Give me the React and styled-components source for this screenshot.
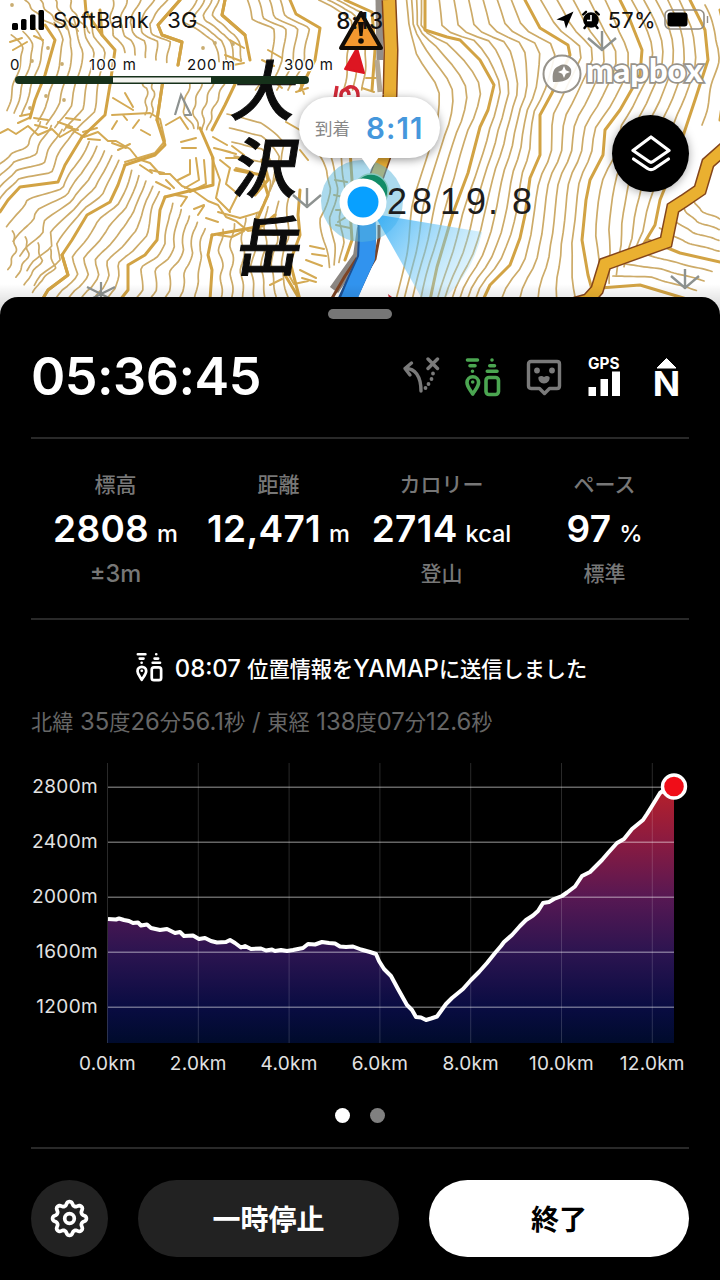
import React from 'react';
import styled, { createGlobalStyle } from 'styled-components';

const GlobalStyle = createGlobalStyle`
  * {
    box-sizing: border-box;
  }

  body {
    background: #000;
    font-family: Inter, 'Noto Sans CJK JP', sans-serif;
    margin: 0;
  }
`;

const Screen = styled.div`
  background: #000;
  height: 1280px;
  overflow: hidden;
  width: 720px;
`;

const MapArea = styled.div`
  background: #fff;
  height: 320px;
  overflow: hidden;
  position: relative;
`;

const MapCanvas = styled.svg`
  display: block;
  left: 0;
  position: absolute;
  top: 0;
`;

const StatusBar = styled.div`
  align-items: center;
  color: #111;
  display: grid;
  font-size: 22px;
  grid-template-columns: 1fr auto 1fr;
  height: 40px;
  letter-spacing: 0.3px;
  padding: 0 10px 0 12px;
  position: relative;
`;

const StatusGroup = styled.div`
  align-items: center;
  display: flex;
  gap: ${(props) => props.$gap}px;
  justify-content: ${(props) => (props.$end ? 'flex-end' : 'flex-start')};
`;

const Carrier = styled.span`
  margin-right: 9px;
`;

const Clock = styled.span`
  font-size: 22.5px;
  font-weight: 500;
  letter-spacing: 0.8px;
  margin-right: 2px;
`;

const Sheet = styled.div`
  background: #000;
  border-radius: 18px 18px 0 0;
  color: #fff;
  height: 983px;
  margin-top: -23px;
  padding: 12px 31px 0;
  position: relative;
`;

const Handle = styled.div`
  background: #767676;
  border-radius: 5px;
  height: 10px;
  margin: 0 auto;
  width: 64px;
`;

const TimerRow = styled.div`
  align-items: center;
  display: flex;
  height: 118px;
  justify-content: space-between;
  padding-bottom: 2px;
`;

const Timer = styled.div`
  font-size: 52px;
  font-weight: 600;
  letter-spacing: -0.5px;
  line-height: 60px;
`;

const Divider = styled.div`
  background: #292929;
  height: 2px;
`;

const Stats = styled.div`
  display: grid;
  grid-template-columns: repeat(4, 163px);
  height: 179px;
  padding: 30px 3px 0;
`;

const Stat = styled.div`
  text-align: center;
  white-space: nowrap;
`;

const Caption = styled.div`
  color: #777;
  font-size: 21px;
  font-weight: 500;
  line-height: 32px;
`;

const Note = styled(Caption)`
  margin-top: -3px;
`;

const Value = styled.div`
  font-size: 37px;
  font-weight: 600;
  letter-spacing: 0.3px;
  line-height: 55px;
`;

const Unit = styled.span`
  font-size: 23.5px;
  font-weight: 500;
  letter-spacing: 0;
  margin-left: 8px;
`;

// Latin runs are set larger than the kana and kanji beside them
const Latin = styled.span`
  font-size: 1.125em;
  white-space: pre;
`;

const Message = styled.div`
  align-items: center;
  display: flex;
  font-size: 21.2px;
  font-weight: 500;
  gap: 12px;
  height: 94px;
  justify-content: center;
  padding-left: 3px;
  white-space: nowrap;
`;

const Coordinates = styled.div`
  color: #666;
  font-size: 21.2px;
  line-height: 30px;
  margin-top: -7px;
  white-space: nowrap;
`;

const Chart = styled.svg`
  display: block;
  margin: 18px 0 0 -31px;
`;

const Dots = styled.div`
  display: flex;
  gap: 20px;
  justify-content: center;
  padding: 8px 0 24px 0;
`;

const Dot = styled.span`
  background: ${(props) => (props.$active ? '#fff' : '#808080')};
  border-radius: 50%;
  height: 15px;
  width: 15px;
`;

const Actions = styled.div`
  display: grid;
  gap: 30px;
  grid-template-columns: 77px 261px 260px;
  padding-top: 31px;
`;

const Button = styled.button`
  align-items: center;
  background: ${(props) => (props.$primary ? '#fff' : '#222')};
  border: 0;
  border-radius: 39px;
  color: ${(props) => (props.$primary ? '#000' : '#fff')};
  display: flex;
  font-family: inherit;
  font-size: 28px;
  font-weight: 700;
  height: 77px;
  justify-content: center;
  padding: 0 0 2px;
`;

const LayersButton = styled.button`
  align-items: center;
  background: #000;
  border: 0;
  border-radius: 50%;
  box-shadow: 0 1px 10px rgba(0, 0, 0, 0.35);
  display: flex;
  height: 77px;
  justify-content: center;
  padding: 0;
  position: absolute;
  right: 31px;
  top: 115px;
  width: 77px;
`;

const Callout = styled.div`
  align-items: center;
  background: #fff;
  border-radius: 31px;
  box-shadow: 0 2px 10px rgba(0, 0, 0, 0.4);
  display: flex;
  gap: 16px;
  height: 61px;
  left: 299px;
  padding-left: 16px;
  position: absolute;
  top: 97px;
  width: 141px;

  &::after {
    border: 9px solid transparent;
    border-bottom: 0;
    border-top: 13px solid #fff;
    content: '';
    left: 62px;
    position: absolute;
    top: 60px;
  }
`;

const CalloutLabel = styled.span`
  color: #888;
  font-size: 17.5px;
`;

const CalloutTime = styled.span`
  color: #4597dc;
  font-size: 29.5px;
  font-weight: 600;
  letter-spacing: 1.1px;
`;

// [line, line, number of thin contours between them]
const families = [
  ['30,118 18,140 0,152', '82,137 65,165 58,182 20,187 8,200 0,212', 4],
  ['82,137 65,165 58,182 20,187 8,200 0,212', '125,165 118,185 110,202 87,215 72,240 62,255 68,275 48,290 42,300', 5],
  ['125,165 118,185 110,202 87,215 72,240 62,255 68,275 48,290 42,300', '165,197 160,210 157,240 145,255 128,265 128,290 120,300', 5],
  ['165,197 160,210 157,240 145,255 128,265 128,290 120,300', '212,235 208,255 212,270 210,300', 5],
  ['0,225 4,245 0,262', '62,255 68,275 48,290 42,300', 4],
  ['212,235 208,255 212,270 210,300', '300,190 298,215 300,235 290,262 300,300', 7],
  ['0,38 14,50 5,85 0,108', '45,25 55,40 45,75 35,100 30,118', 3],
  ['45,25 55,40 45,75 35,100 30,118', '100,10 102,35 115,50 110,85 105,115 82,137', 5],
  ['10,0 30,18 45,25', '85,0 86,12 102,35', 4],
  ['100,0 102,35 115,50', '180,0 158,25 162,35 182,42 178,65', 5],
  ['125,80 140,85 140,112', '163,80 160,100 157,120', 2],
  ['178,85 172,112 190,128', '237,80 225,105 212,130', 4],
  ['190,0 172,22 205,40 212,62', '225,0 222,15 245,35 250,60', 4],
  ['237,0 240,20 262,28 262,60 245,90', '290,0 296,14 320,28 315,60 300,90', 4],
  ['225,100 262,110 290,130 280,170', '235,170 262,175 268,195 255,225', 4],
  ['310,0 345,20 340,50 335,90', '345,0 372,12 375,50 372,90', 3],
  ['305,150 318,170 325,190 310,220 315,245 325,270', '350,150 352,180 350,210 352,240 345,260', 3],
  ['402,0 406,60 428,92 424,125 414,160 402,205 398,250 388,300', '425,0 425,30 447,37 460,40 480,60 494,85 488,110 480,127 468,173 453,213 437,267 430,300', 4],
  ['425,0 425,30 447,37 460,40 480,60 494,85 488,110 480,127 468,173 453,213 437,267 430,300', '525,0 540,28 568,45 570,55 552,93 540,115 540,155 530,178 525,215 520,238 510,265 490,285 483,300', 6],
  ['525,0 540,28 568,45 570,55 552,93 540,115 540,155 530,178 525,215 520,238 510,265 490,285 483,300', '620,0 630,20 642,50 640,75 620,110 605,130 603,155 590,180 586,200 582,240 588,275 595,300', 5],
  ['620,0 630,20 642,50 640,75 620,110 605,130 603,155 590,180 586,200 582,240 588,275 595,300', '690,0 705,30 708,60 695,100 685,130 672,170 660,200 655,225 640,250', 5],
  ['690,0 705,30 708,60 695,100 685,130', '720,10 730,50 720,120', 1],
  ['700,180 704,200 720,208', '648,240 680,253 720,262', 4],
  ['648,240 680,253 720,262', '600,288 640,285 690,300', 3],
];

const cliffs =
  'M0 133l8 -4 8 5 12 -8 10 9 14 -6 8 8 12 -7 12 7 14 -5 10 9 8 0 14 8 8 10 12 4 10 11 10 0 12 12 12 5 14 10 10 4 8 12 10 4 12 10 12 -2 14 6 12 -4' +
  'M10 42l12 -4M13 50l14 -8M34 36l9 4M18 123l11 -5M20 116l10 -2M34 118l14 2M35 125l12 3M58 122l14 5M66 118l14 2M66 127l12 3M83 132l14 -4M88 139l12 1' +
  'M113 98l20 12M125 93l8 14M112 115l38 -2 10 6 5 22 -10 12 -30 9M112 129l5 -8M123 115l4 5M133 128l6 -8M141 130l9 5M112 143l14 5M118 150l12 -6' +
  'M140 165l12 8M150 170l14 3M166 125l14 -8 8 12M181 142l15 -4M182 148l14 0M156 182l14 7M166 180l8 8M194 209l10 -4M198 215l6 -9M206 218l12 4M213 137l14 8M214 148l16 4' +
  'M190 160l0 14 -12 6M196 158l3 22 -14 8M204 160l2 24 -16 8M175 195l12 2 -6 9M218 235l14 2 12 -6' +
  'M220 160l10 8 -4 16 12 10 -8 16M212 158l8 22 -4 18 14 14M218 212l22 6 20 -6' +
  'M225 55l16 6M230 40l14 8M228 66l16 -3M262 60l12 6M268 50l14 8M272 80l10 8M290 85l12 -6M296 92l12 -4M300 82l4 12' +
  'M222 150l14 4M226 158l14 0M232 146l12 9M236 168l16 4M300 270l16 8M302 278l14 4M306 260l16 6M335 180l12 2M334 195l14 3M336 210l12 0M336 225l14 3M338 222l10 -6' +
  'M286 270l8 14 14 -3M270 285l12 -6M300 150l8 10M310 246l14 3M312 254l14 2M362 88l12 4M366 78l10 0M300 130l-14 -8';

const boldExtra = [
  '163,80 160,100 157,120 165,145 155,155 125,165',
  '200,128 213,158 213,185 165,197',
  '212,235 240,230 262,226 275,215',
  '180,0 158,25 162,35 182,42 178,65',
  '225,0 222,15 245,35',
  '262,160 268,180 255,195',
  '290,262 285,275 300,300',
];

const roads = [
  '570,305 588,300 597,290 605,264 666,242 673,208 684,201 700,190 708,163 725,148',
];

function parse(line) {
  return line.split(' ').map((pair) => pair.split(',').map(Number));
}

function resample(points, count) {
  const lengths = [0];
  for (let i = 1; i < points.length; i += 1) {
    lengths.push(lengths[i - 1] + Math.hypot(points[i][0] - points[i - 1][0], points[i][1] - points[i - 1][1]));
  }
  const total = lengths[lengths.length - 1];
  return Array.from({ length: count }, (_, n) => {
    const at = (total * n) / (count - 1);
    let i = 1;
    while (i < lengths.length - 1 && lengths[i] < at) i += 1;
    const t = (at - lengths[i - 1]) / (lengths[i] - lengths[i - 1]);
    return [0, 1].map((k) => points[i - 1][k] + (points[i][k] - points[i - 1][k]) * t);
  });
}

function between(a, b, count) {
  const from = resample(parse(a), 28);
  const to = resample(parse(b), 28);
  return Array.from({ length: count }, (_, n) => {
    const t = (n + 1) / (count + 1);
    return from
      .map(([x, y], i) => {
        const wobble = Math.sin(i * 0.6 + n * 0.5) * 1.1;
        return `${(x + (to[i][0] - x) * t + wobble).toFixed(1)},${(y + (to[i][1] - y) * t).toFixed(1)}`;
      })
      .join(' ');
  });
}

function Contours() {
  const bold = [...new Set(families.map(([, b]) => b))];
  return (
    <g fill="none" strokeLinejoin="round" strokeLinecap="round">
      <g stroke="#cdab68" strokeWidth="1.7">
        {families.flatMap(([a, b, count]) => between(a, b, count)).map((points) => (
          <polyline key={points} points={points} />
        ))}
      </g>
      <path d={cliffs} stroke="#d4aa54" strokeWidth="2" />
      <g stroke="#d2a344" strokeWidth="3">
        {[...bold, ...boldExtra].map((points) => (
          <polyline key={points} points={points} />
        ))}
      </g>
    </g>
  );
}

function Conifer({ x, y }) {
  return <path d={`M${x} ${y - 20}v20M${x - 14} ${y - 13}l14 12 14 -12`} fill="none" stroke="#8d9290" strokeWidth="2.4" />;
}

function TrailMap() {
  return (
    <MapCanvas width="720" height="320" viewBox="0 0 720 320">
      <defs>
        <linearGradient id="beam" gradientUnits="userSpaceOnUse" x1="380" y1="212" x2="462" y2="275">
          <stop offset="0" stopColor="#2ba9f5" stopOpacity="0.85" />
          <stop offset="1" stopColor="#8fd6f7" stopOpacity="0.3" />
        </linearGradient>
        <linearGradient id="sheetShade" x1="0" y1="0" x2="0" y2="1">
          <stop offset="0" stopColor="#000" stopOpacity="0" />
          <stop offset="1" stopColor="#000" stopOpacity="0.22" />
        </linearGradient>
      </defs>
      <Contours />
      <g fill="#c9ad72">
        {[[48, 48], [32, 61], [62, 64], [46, 96], [64, 100], [30, 108], [203, 48], [215, 43], [233, 44], [12, 5]].map(([x, y]) => (
          <circle key={`${x}-${y}`} cx={x} cy={y} r="1.9" />
        ))}
      </g>
      <Conifer x={602} y={51} />
      <Conifer x={685} y={289} />
      <Conifer x={307} y={208} />
      <path d="M87 287l28 14M115 287l-28 14M101 282v20M175 115l6 -20 10 20M184 115h8" fill="none" stroke="#8d9290" strokeWidth="2.2" />

      <g fill="none" strokeLinejoin="round">
        <path d="M379 0L380 60" stroke="#948e88" strokeWidth="7" />
        <path d="M377 60L380 92" stroke="#b5a892" strokeWidth="5" />
        <path d="M362 228L358 256 334 290" stroke="#8b8682" strokeWidth="10" />
        {roads.map((points) => (
          <g key={points} strokeLinejoin="miter">
            <polyline points={points} stroke="#84451b" strokeWidth="14" />
            <polyline points={points} stroke="#eab030" strokeWidth="11" />
          </g>
        ))}
        <path d="M389 0L391 50 390 95 386 150 372 190" stroke="#84451b" strokeWidth="15" />
        <path d="M389 0L391 50 390 95 386 150 372 190" stroke="#e9ae34" strokeWidth="12" />
        <path d="M379 225L379 238 375 259 362 280M357 258L345 276 331 300" stroke="#7d4425" strokeWidth="3" />
        <path d="M366 215L367 236 366 258 356 280 344 306" stroke="#1c4f92" strokeWidth="18" />
        <path d="M367 215L368 236 367 258 357 280 346 306" stroke="#3193ee" strokeWidth="16" />
      </g>

      <circle cx="362" cy="201" r="41" fill="#58b5dc" fillOpacity="0.5" />
      <path d="M374 214L482 232A124 124 0 0 1 446 297H421Z" fill="url(#beam)" />

      <g fill="#0c0c0c" stroke="#0c0c0c" fontFamily="'Noto Sans CJK JP', sans-serif" fontWeight="500" fontSize="65">
        <text transform="translate(229 115) skewX(-9)">大</text>
        <text transform="translate(231 192) skewX(-9)">沢</text>
        <text transform="translate(234 270) skewX(-9)">岳</text>
      </g>
      <text
        x="387 412 440 466 488 512"
        y="214"
        fill="#1d1d1d"
        fontFamily="'Liberation Sans', sans-serif"
        fontSize="36"
      >
        2819.8
      </text>

      <path d="M357 48L345 69 364 73Z" fill="#dd1622" stroke="#dd1622" strokeWidth="2" strokeLinejoin="round" />
      <path d="M337 86l-2 12M341 98c-1 -10 8 -11 8 -3M345 90c4 -5 14 -5 13 8" fill="none" stroke="#d22a38" strokeWidth="3.5" />
      <path d="M361 13L341 48H381Z" fill="#f3982f" stroke="#120c06" strokeWidth="4" strokeLinejoin="round" />
      <path d="M358 22h6l-1.5 14h-3z" fill="#120c06" />
      <circle cx="361" cy="41" r="2.8" fill="#120c06" />
      <path d="M388 294l8 6 -6 3z" fill="#d22a38" />

      <g fontFamily="Inter, sans-serif" fontSize="15" fill="#111" stroke="#fff" strokeWidth="2.5" paintOrder="stroke">
        <text x="10" y="70">0</text>
        <text x="89" y="70" textLength="47">100 m</text>
        <text x="187" y="70" textLength="48">200 m</text>
        <text x="284" y="70" textLength="49">300 m</text>
      </g>
      <rect x="15" y="76" width="294" height="8" rx="4" fill="#16311a" />
      <rect x="113" y="77.500" width="98" height="5" fill="#f4f4f0" />

      <g>
        <circle cx="562" cy="74" r="18.5" fill="#fff" fillOpacity="0.9" stroke="#97938b" strokeWidth="2" />
        <path d="M553 82c-1 -8 0 -14 6 -16 5 -3 10 -1 12 3 1 5 -1 9 -5 11 -4 2 -9 2 -13 2z" fill="#8f8b84" />
        <path d="M564 66l1.800 4.200 4.200 1.800 -4.200 1.800 -1.800 4.200 -1.800 -4.200 -4.200 -1.800 4.200 -1.800z" fill="#fff" />
        <text
          x="586"
          y="82"
          textLength="117"
          lengthAdjust="spacingAndGlyphs"
          fill="#fff"
          stroke="#97938b"
          strokeWidth="3.4"
          paintOrder="stroke"
          fontFamily="Lato, sans-serif"
          fontWeight="900"
          fontSize="33"
        >
          mapbox
        </text>
      </g>

      <circle cx="371" cy="191" r="17" fill="#118b67" stroke="#85c7bd" strokeWidth="1.5" />
      <circle cx="363" cy="202" r="23.5" fill="#fff" />
      <circle cx="363" cy="202" r="15.5" fill="#08a0ff" />
      <rect y="284" width="720" height="36" fill="url(#sheetShade)" />
    </MapCanvas>
  );
}

function SignalBars() {
  return (
    <svg width="32" height="21" viewBox="0 0 32 21" fill="#000">
      <rect x="0" y="13" width="6" height="7" rx="1.5" />
      <rect x="9" y="9" width="5.5" height="11" rx="1.5" />
      <rect x="18" y="4.5" width="5.5" height="15.5" rx="1.5" />
      <rect x="26.5" y="0" width="5.5" height="20" rx="1.5" />
    </svg>
  );
}

function LocationArrow() {
  return (
    <svg width="18" height="18" viewBox="0 0 18 18" fill="#000">
      <path d="M17.5 0.5L0.5 8.5 8 10 10 17.5Z" />
    </svg>
  );
}

function AlarmIcon() {
  return (
    <svg width="18" height="20" viewBox="0 0 18 20">
      <circle cx="9" cy="10" r="7.8" />
      <path d="M1.200 4.500L4 1.800M16.800 4.500L14 1.800M4 16l-1.500 2M14 16l1.500 2" stroke="#000" strokeWidth="2.400" strokeLinecap="round" />
      <path d="M9 5v5.5H5" stroke="#fff" strokeWidth="1.6" fill="none" />
    </svg>
  );
}

function BatteryIcon() {
  return (
    <svg width="46" height="22" viewBox="0 0 46 22">
      <rect x="1" y="1" width="39" height="19" rx="5" fill="none" stroke="#918c83" strokeWidth="1.6" />
      <rect x="3.5" y="3.5" width="20" height="14" rx="3" />
      <path d="M43.5 7v7" stroke="#918c83" strokeWidth="1.4" />
    </svg>
  );
}

function LayersIcon() {
  return (
    <svg width="40" height="38" viewBox="0 0 40 38" fill="none" stroke="#fff" strokeWidth="3.200" strokeLinejoin="round" strokeLinecap="round">
      <path d="M20 2L38 15.5 22 26.5Q20 28 18 26.5L2 15.5Z" />
      <path d="M2.500 24L16.500 33.5Q20 35.800 23.500 33.5L37.500 24" />
    </svg>
  );
}

function DetourIcon() {
  return (
    <svg width="38" height="40" viewBox="0 0 38 40" fill="none" stroke="#7a7a7a" strokeWidth="3.4" strokeLinecap="round">
      <path d="M9.500 6L3 11.500 8 18M3 11.500C13 11 19 19 19 34" strokeLinejoin="round" />
      <path d="M26 2l9.500 9.500M35.500 2L26 11.500" />
      <path d="M31 16.500v0M29.500 22v0M26.500 27v0M23.500 31v0" strokeWidth="3.800" />
    </svg>
  );
}

function BeaconIcon({ color, width, height }) {
  return (
    <svg width={width} height={height} viewBox="0 0 36 40" fill="none" stroke={color} strokeWidth="3.6" strokeLinecap="round">
      <path d="M2.500 3H12.500M5 8.700H10M7.500 14.300v0M27 3v0M24.800 8.700H29.500M22.300 14.300H32" />
      <path d="M7.700 37C5 32.500 2 29.500 2 25.500a5.800 5.800 0 0 1 11.600 0C13.600 29.500 10.500 32.500 7.700 37z" strokeLinejoin="round" />
      <circle cx="7.700" cy="25" r="1.800" fill={color} stroke="none" />
      <rect x="21" y="20.500" width="12.500" height="17" rx="3" />
    </svg>
  );
}

function BubbleIcon() {
  return (
    <svg width="36" height="40" viewBox="0 0 36 40" fill="none" stroke="#7a7a7a" strokeWidth="3.4" strokeLinejoin="round">
      <path d="M5 4.500H31Q33.500 4.500 33.500 7V29Q33.500 31.500 31 31.500H23.500L18.500 36.500 13.500 31.500H5Q2.500 31.500 2.500 29V7Q2.500 4.500 5 4.500Z" />
      <g fill="#7a7a7a" stroke="none">
        <circle cx="11" cy="13.500" r="2.900" />
        <circle cx="26" cy="13.500" r="2.900" />
        <path d="M12.500 20q3 -2 5.500 0 3 -2 5.500 0c.8 3 -2 6.500 -5.500 6.500s-6.300 -3.500 -5.500 -6.500z" />
      </g>
    </svg>
  );
}

function GpsIcon() {
  return (
    <svg width="35" height="42" viewBox="0 0 35 42" fill="#fff" overflow="visible">
      <text x="1" y="12.500" textLength="31.500" lengthAdjust="spacingAndGlyphs" fontFamily="Inter, sans-serif" fontSize="15.500" fontWeight="700">
        GPS
      </text>
      <path d="M1.500 31H9V40H1.500ZM13.500 23H21V40H13.500ZM25 15.500H33V40H25Z" />
    </svg>
  );
}

function NorthIcon() {
  return (
    <svg width="33" height="42" viewBox="-7 0 33 42" fill="#fff" overflow="visible">
      <path d="M12.500 2.500L22 12H3Z" stroke="#fff" strokeLinejoin="round" />
      <text x="-1.300" y="40" textLength="27.500" lengthAdjust="spacingAndGlyphs" fontFamily="Inter, sans-serif" fontSize="33.500" fontWeight="700">
        N
      </text>
    </svg>
  );
}

const IconRow = styled.div`
  align-items: center;
  display: flex;
  gap: 25px;
  margin-right: 9px;
`;

function gearPath() {
  const steps = 96;
  const points = Array.from({ length: steps }, (_, i) => {
    const angle = (i / steps) * Math.PI * 2;
    const radius = 15 + 2.2 * Math.tanh(1.3 * Math.cos(angle * 8));
    return `${(20 + radius * Math.sin(angle)).toFixed(2)} ${(20 - radius * Math.cos(angle)).toFixed(2)}`;
  });
  return `M${points.join('L')}Z`;
}

function GearIcon() {
  return (
    <svg width="40" height="40" viewBox="0.5 -0.5 40 40" fill="none" stroke="#fff" strokeWidth="3.7" strokeLinejoin="round">
      <path d={gearPath()} />
      <circle cx="20" cy="20" r="4.8" />
    </svg>
  );
}

const elevation =
  '108,919 116,919.500 119,918.500 124,920 129,921 133,923 138,922.500 141,925.500 147,924.500 151,928 160,930 167,929 175,933 180,932 184,936 193,935.500 ' +
  '199,939 205,938 211,941 217,942.500 226,942 230,940 235,943 241,947.500 245,946 251,949 261,948.500 266,950.500 272,949.500 275,951 281,950 287,951 293,950 ' +
  '303,948 308,944 315,944.500 322,942 329,943 335,943.500 340,946.500 346,947 353,946.500 361,949.500 370,952 376,954 379,961 384,969 391,976 398,989 ' +
  '407,1005 412,1010 416,1017 421,1017.500 426,1020 431,1018.500 437,1016.500 446,1004 452,998 463,989 471,980 479,972 487,963 495,953 501,946 504,942 ' +
  '512,935 520,926 526,920 533,915.500 538,911 543,903 549,902 554,899 562,896 567,892.500 575,886.500 582,876 590,872 597,865 602,860 608,853 617,843 ' +
  '624,839 632,829 643,820 647,814 652,806 660,793 667,788 674,786.500';

const distances = ['0.0', '2.0', '4.0', '6.0', '8.0', '10.0', '12.0'];
const heights = [2800, 2400, 2000, 1600, 1200];

function ElevationChart() {
  return (
    <Chart width="720" height="345" viewBox="0 755 720 345" fontFamily="Inter, sans-serif" fontSize="19" fill="#e2e2e2">
      <defs>
        <linearGradient id="climb" gradientUnits="userSpaceOnUse" x1="0" y1="787" x2="0" y2="1043">
          <stop offset="0" stopColor="#b8202a" />
          <stop offset="0.210" stopColor="#8b1b40" />
          <stop offset="0.430" stopColor="#571853" />
          <stop offset="0.650" stopColor="#2b1450" />
          <stop offset="0.860" stopColor="#090c42" />
          <stop offset="1" stopColor="#000b2c" />
        </linearGradient>
      </defs>
      <polygon points={`107,1043 ${elevation} 674,1043`} fill="url(#climb)" />
      {distances.map((km, i) => (
        <rect key={km} x={107 + i * 90.8} y="763" width="1" height="280" fill="#fff" fillOpacity="0.16" />
      ))}
      {heights.map((m, i) => (
        <rect key={m} x="108" y={786.5 + i * 55} width="566" height="1.500" fill="#fff" fillOpacity="0.4" />
      ))}
      <polyline points={elevation} fill="none" stroke="#fff" strokeWidth="4" strokeLinejoin="round" />
      <circle cx="674" cy="786.500" r="11.500" fill="#f00d18" stroke="#fff" strokeWidth="3.400" />
      {heights.map((m, i) => (
        <text key={m} x="98" y={792.5 + i * 55} textAnchor="end" letterSpacing="0.350">
          {m}m
        </text>
      ))}
      {distances.map((km, i) => (
        <text key={km} x={107.5 + i * 90.8} y="1070" textAnchor="middle" letterSpacing="0.250">
          {km}km
        </text>
      ))}
    </Chart>
  );
}

function MixedText({ children }) {
  return children
    .split(/([ -~±]+)/)
    .filter(Boolean)
    .map((run, i) => (/^[ -~±]/.test(run) ? <Latin key={i}>{run}</Latin> : run));
}

const stats = [
  { label: '標高', value: '2808', unit: 'm', note: '±3m' },
  { label: '距離', value: '12,471', unit: 'm', note: '' },
  { label: 'カロリー', value: '2714', unit: 'kcal', note: '登山' },
  { label: 'ペース', value: '97', unit: '%', note: '標準' },
];

export default function App() {
  return (
    <Screen lang="ja">
      <GlobalStyle />
      <MapArea>
        <TrailMap />
        <StatusBar>
          <StatusGroup $gap={9}>
            <SignalBars />
            <Carrier>SoftBank</Carrier>
            <span>3G</span>
          </StatusGroup>
          <Clock>8:13</Clock>
          <StatusGroup $gap={8} $end>
            <LocationArrow />
            <AlarmIcon />
            <span>57%</span>
            <BatteryIcon />
          </StatusGroup>
        </StatusBar>
        <LayersButton aria-label="レイヤー">
          <LayersIcon />
        </LayersButton>
        <Callout>
          <CalloutLabel>到着</CalloutLabel>
          <CalloutTime>8:11</CalloutTime>
        </Callout>
      </MapArea>
      <Sheet>
        <Handle />
        <TimerRow>
          <Timer>05:36:45</Timer>
          <IconRow>
            <DetourIcon />
            <BeaconIcon color="#4ba651" width={36} height={40} />
            <BubbleIcon />
            <GpsIcon />
            <NorthIcon />
          </IconRow>
        </TimerRow>
        <Divider />
        <Stats>
          {stats.map((stat) => (
            <Stat key={stat.label}>
              <Caption>{stat.label}</Caption>
              <Value>
                {stat.value}
                <Unit>{stat.unit}</Unit>
              </Value>
              <Note>
                <MixedText>{stat.note}</MixedText>
              </Note>
            </Stat>
          ))}
        </Stats>
        <Divider />
        <Message>
          <BeaconIcon color="#fff" width={27} height={30} />
          <span>
            <MixedText>08:07 位置情報をYAMAPに送信しました</MixedText>
          </span>
        </Message>
        <Coordinates>
          <MixedText>北緯 35度26分56.1秒 / 東経 138度07分12.6秒</MixedText>
        </Coordinates>
        <ElevationChart />
        <Dots>
          <Dot $active />
          <Dot />
        </Dots>
        <Divider />
        <Actions>
          <Button aria-label="設定">
            <GearIcon />
          </Button>
          <Button>一時停止</Button>
          <Button $primary>終了</Button>
        </Actions>
      </Sheet>
    </Screen>
  );
}
